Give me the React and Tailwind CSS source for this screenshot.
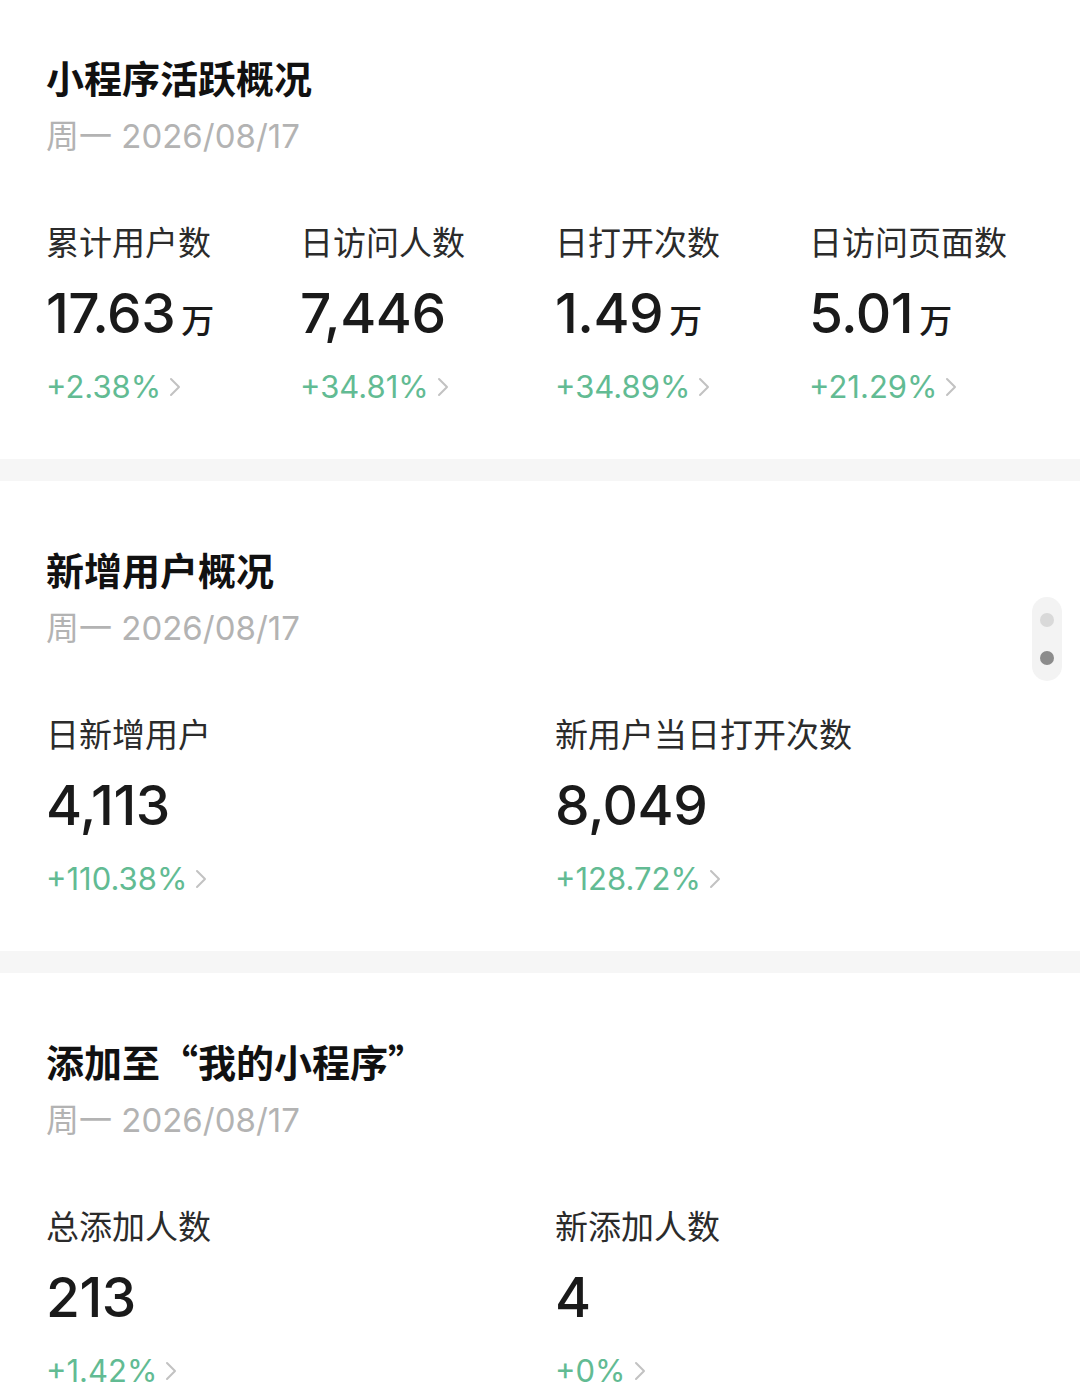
import React from "react";

const FONT = { fontFamily: '"Inter", "Noto Sans CJK SC", sans-serif' };
const CJK = { fontFamily: '"Noto Sans CJK SC", sans-serif' };

function Chevron() {
  return (
    <svg width="12" height="22" viewBox="0 0 12 22" className="ml-[8px] shrink-0">
      <path d="M2 3 L10 11 L2 19" fill="none" stroke="#c2c2c2" strokeWidth="2" strokeLinecap="round" strokeLinejoin="round" />
    </svg>
  );
}

function Metric({ label, value, unit, pct }) {
  return (
    <div className="flex flex-col">
      <div className="text-[33px] leading-[44px] text-[#2b2b2b] mt-[61px] whitespace-nowrap" style={CJK}>{label}</div>
      <div className="flex items-baseline mt-[20px] h-[60px] text-[#1a1a1a]">
        <span className="text-[55px] leading-[60px] font-medium tracking-[-0.5px]">{value}</span>
        {unit && <span className="text-[33px] ml-[6px] font-medium" style={CJK}>{unit}</span>}
      </div>
      <div className="flex items-center mt-[24px] h-[40px]">
        <span className="text-[31px] leading-[40px] text-[#62bb93]">{pct}</span>
        <Chevron />
      </div>
    </div>
  );
}

function Section({ title, first, cols, items }) {
  return (
    <div className={`bg-white px-[46px] pb-[52px] ${first ? "pt-[53px]" : "pt-[64px]"}`}>
      <div className="text-[38px] leading-[48px] font-semibold text-[#111]" style={CJK}>{title}</div>
      <div className="text-[33px] leading-[44px] text-[#b3b3b3] mt-[13px]">周一 2026/08/17</div>
      <div className={cols === 4 ? "grid grid-cols-[254px_255px_254px_1fr]" : "grid grid-cols-[509px_1fr]"}>
        {items.map((it) => (
          <Metric key={it.label} {...it} />
        ))}
      </div>
    </div>
  );
}

export default function App() {
  return (
    <div className="relative w-[1080px] h-[1395px] overflow-hidden bg-white" style={FONT}>
      <Section
        first
        title="小程序活跃概况"
        cols={4}
        items={[
          { label: "累计用户数", value: "17.63", unit: "万", pct: "+2.38%" },
          { label: "日访问人数", value: "7,446", pct: "+34.81%" },
          { label: "日打开次数", value: "1.49", unit: "万", pct: "+34.89%" },
          { label: "日访问页面数", value: "5.01", unit: "万", pct: "+21.29%" },
        ]}
      />
      <div className="h-[22px] bg-[#f6f6f6]" />
      <Section
        title="新增用户概况"
        cols={2}
        items={[
          { label: "日新增用户", value: "4,113", pct: "+110.38%" },
          { label: "新用户当日打开次数", value: "8,049", pct: "+128.72%" },
        ]}
      />
      <div className="h-[22px] bg-[#f6f6f6]" />
      <Section
        title="添加至“我的小程序”"
        cols={2}
        items={[
          { label: "总添加人数", value: "213", pct: "+1.42%" },
          { label: "新添加人数", value: "4", pct: "+0%" },
        ]}
      />
      <div className="absolute left-[1032px] top-[597px] w-[30px] h-[84px] rounded-full bg-[#f3f3f3] flex flex-col items-center justify-between py-[16px]">
        <div className="w-[14px] h-[14px] rounded-full bg-[#d9d9d9]" />
        <div className="w-[14px] h-[14px] rounded-full bg-[#8c8c8c]" />
      </div>
    </div>
  );
}
